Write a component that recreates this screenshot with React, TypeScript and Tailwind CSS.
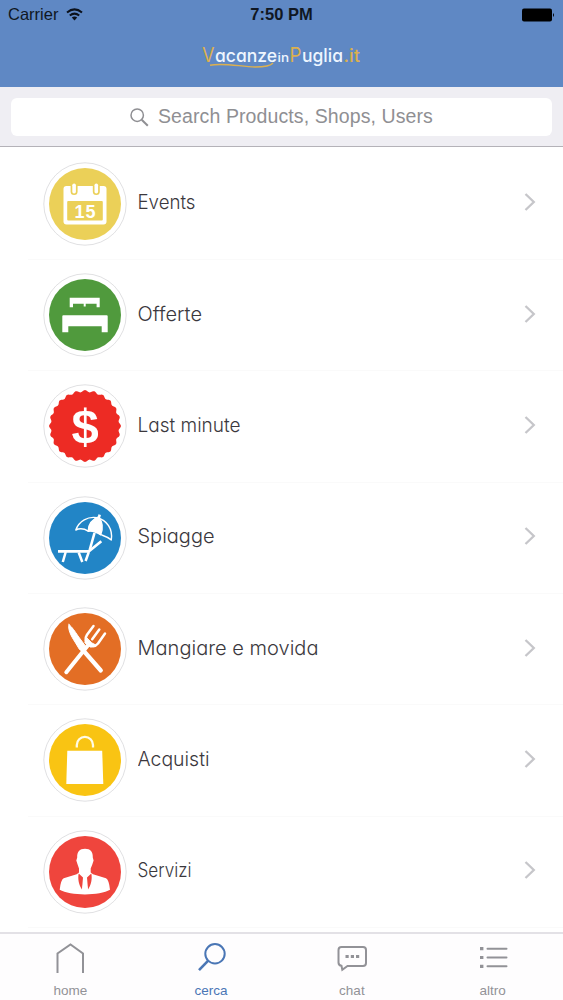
import React, { useState } from 'react';

const labelFont = "font-['Inter','Lato',sans-serif] [font-feature-settings:'cv11']";

function EventsIcon() {
    return (
        <g>
            <circle r="36" fill="#ebd058" />
            <rect x="-21.5" y="-18" width="43" height="38.5" rx="3" fill="#fff" />
            <rect x="-17.8" y="-3" width="35.6" height="19.5" rx="1" fill="#ebd058" />
            <rect x="-14.4" y="-22" width="7" height="13" rx="3.5" fill="#ebd058" />
            <rect x="7.8" y="-22" width="7" height="13" rx="3.5" fill="#ebd058" />
            <rect x="-12.7" y="-20.5" width="3.6" height="10" rx="1.8" fill="#fff" />
            <rect x="9.5" y="-20.5" width="3.6" height="10" rx="1.8" fill="#fff" />
            <text x="0" y="13.5" textAnchor="middle" textLength="21" fontSize="18" fontWeight="700" fill="#fff" className="font-['Liberation_Sans',sans-serif]">15</text>
        </g>
    );
}

function OfferteIcon() {
    return (
        <g>
            <circle r="36" fill="#509a3d" />
            <path d="M-15.3-17.3H14.7V-7.8H11.6V-11.3H.7V-8.4H-1.3V-11.3H-12V-7.8H-15.3Z" fill="#fff" />
            <path d="M-21.7.3H21.7Q22.7.3 22.7 1.3V17.3H16.7V11.3H-16.7V17.3H-22.7V1.3Q-22.7.3-21.7.3Z" fill="#fff" />
        </g>
    );
}

function LastMinuteIcon() {
    const points = [];
    for (let i = 0; i < 360; i++) {
        const angle = (i / 360) * Math.PI * 2;
        const radius = 34.9 + 1.0 * Math.cos(angle * 24);
        points.push(`${(radius * Math.sin(angle)).toFixed(2)},${(-radius * Math.cos(angle)).toFixed(2)}`);
    }
    return (
        <g>
            <polygon points={points.join(' ')} fill="#ed2b24" />
            <text x="0" y="16.5" textAnchor="middle" fontSize="49" fontWeight="700" fill="#fff" className="font-['Liberation_Sans',sans-serif]">$</text>
        </g>
    );
}

function SpiaggeIcon() {
    return (
        <g fill="none" stroke="#fff" strokeWidth="1.4" strokeLinejoin="round">
            <circle r="36" fill="#2285c6" stroke="none" />
            <path d="M-9.2-8C-6-17 3-22 12-20.3C22-18 28-9 26.3 2C23-1.2 19-2 15.7-3.3C12-7 7-8.5 3.2-6.8C-1-9.5-6-9.5-9.2-8Z" />
            <path d="M3.2-6.8C3-13 7-19 13.5-21C17.5-16 18-9 15.7-3.3C12-5.5 7-7.5 3.2-6.8Z" fill="#fff" />
            <path d="M13.8-20L14.7-23.3" strokeWidth="2.6" />
            <path d="M9.5-5L4.7 12" strokeWidth="2.6" />
            <path d="M-27 13.3H4L16.3 3.2" strokeWidth="2.7" />
            <path d="M-19.3 14L-22.2 24M-6.3 14.5L-2.7 24M3.8 14L.6 23" strokeWidth="2.5" />
        </g>
    );
}

function MangiareIcon() {
    return (
        <g stroke="#fff" strokeLinecap="round" strokeLinejoin="round" fill="none">
            <circle r="36" fill="#e36e25" stroke="none" />
            <path d="M-18.7 23.2L4-5" strokeWidth="4" />
            <path d="M8.5-23L2-14.2C-.8-10 .5-6.5 3.7-4.4C7.2-2 10.5-2.5 13-5.5L20-15.5" strokeWidth="2.5" />
            <path d="M14.3-19.5L7.2-9.8" strokeWidth="2.5" />
            <path d="M1.5-11L-.2-6.2L5.5-2L11.8-3.5L7-6Z" fill="#fff" strokeWidth="1" />
            <path d="M-16-24.5C-17.5-20-14-13-10-7L-5.5.5L-1 2.5L1.5-1.5L-7-13C-10-17.5-12.5-21.5-16-24.5Z" fill="#fff" strokeWidth="1" />
            <path d="M-3 0L15.8 21.5" strokeWidth="4.2" />
        </g>
    );
}

function AcquistiIcon() {
    return (
        <g>
            <circle r="36" fill="#f9c413" />
            <path d="M-17.7-9.3H17.2L18.3 24H-18.7Z" fill="#fff" />
            <path d="M-8.2-12.5V-15A8.1 8.1 0 0 1 8-15V-12.5" fill="none" stroke="#fffbe6" strokeWidth="2.3" />
        </g>
    );
}

function ServiziIcon() {
    return (
        <g>
            <circle r="36" fill="#ef453d" />
            <path d="M0-23.3C5.5-23.3 8-20 7.8-14.5L8.6-11.5L7.3-7.5L5.7-3.5V.5L8 2.2L21 6.3Q24 8 25 17.8C15 24-15 24-25.3 17.8Q-24.3 8-21.3 6.3L-8.3 2.2L-6 .5V-3.5L-7.4-7.5L-8.7-11.5L-7.8-14.5C-8-20-5.5-23.3 0-23.3Z" fill="#fff" />
            <path d="M-6.3 1.5L-2 5.5L-3 17.5C-6 13-7.5 7-6.3 1.5ZM6.3 1.5L2 5.5L3 17.5C6 13 7.5 7 6.3 1.5Z" fill="#ef453d" />
            <path d="M-2 5.3H1.8L1 8L2.7 17H-2.8L-1.2 8Z" fill="#fff" />
        </g>
    );
}

const categories = [
    { name: 'Events', length: 58, icon: <EventsIcon /> },
    { name: 'Offerte', length: 64.5, icon: <OfferteIcon /> },
    { name: 'Last minute', length: 103, icon: <LastMinuteIcon /> },
    { name: 'Spiagge', length: 77, icon: <SpiaggeIcon /> },
    { name: 'Mangiare e movida', length: 181, icon: <MangiareIcon /> },
    { name: 'Acquisti', length: 72, icon: <AcquistiIcon /> },
    { name: 'Servizi', length: 54, icon: <ServiziIcon /> },
];

function StatusBar() {
    return (
        <div className="grid h-[29px] grid-cols-3 items-center px-2 text-[16.5px] text-[#101722]">
            <div className="flex items-center gap-2">
                <span>Carrier</span>
                <svg width="17" height="13" viewBox="0 0 17 13" fill="none" stroke="#0b111b" strokeWidth="2">
                    <path d="M1 4.6Q8.5-1.8 16 4.6M3.8 7.6Q8.5 3.6 13.2 7.6" />
                    <path d="M5.8 9.6Q8.5 7.6 11.2 9.6L8.5 12.4Z" fill="#0b111b" stroke="none" />
                </svg>
            </div>
            <div className="text-center font-bold">7:50 PM</div>
            <div className="flex items-center justify-end">
                <svg width="33" height="14" viewBox="0 0 33 14">
                    <rect x="0" y="0.5" width="30" height="13" rx="2" />
                    <path d="M31 5Q33 7 31 9Z" />
                </svg>
            </div>
        </div>
    );
}

function Logo() {
    return (
        <svg width="164" height="30" viewBox="200 42 164 30" className={labelFont} fill="#eef6ff">
            <text x="202" y="62" fontSize="20" textLength="12.5" lengthAdjust="spacingAndGlyphs" fill="#dcb04f">V</text>
            <text x="215" y="62.3" fontSize="18" fontWeight="500" textLength="62" lengthAdjust="spacingAndGlyphs">acanze</text>
            <text x="277.5" y="62" fontSize="12.5" fontWeight="500" textLength="11.5" lengthAdjust="spacingAndGlyphs">in</text>
            <text x="289.5" y="62" fontSize="20" textLength="12" lengthAdjust="spacingAndGlyphs" fill="#dcb04f">P</text>
            <text x="302" y="62" fontSize="18" fontWeight="500" textLength="41" lengthAdjust="spacingAndGlyphs">uglia</text>
            <text x="343.5" y="62" fontSize="18" fontWeight="500" textLength="16.5" lengthAdjust="spacingAndGlyphs" fill="#dcb04f">.it</text>
            <path d="M210 65.3C222 62.5 240 66.5 255 67C265 67 271 65.5 273 63" fill="none" stroke="#dcb04f" strokeWidth="1.4" />
        </svg>
    );
}

function CategoryRow({ name, length, icon }: any) {
    return (
        <li className="ml-7 flex h-[111.35px] items-center border-b border-[#fafafa] pl-[15px] pr-[27px]">
            <svg width="84" height="84" viewBox="-42 -42 84 84">
                <circle r="41.2" fill="#fff" stroke="#dcdcdf" strokeWidth="0.9" />
                {icon}
            </svg>
            <svg width="200" height="32" viewBox="0 0 200 32" className={`ml-[11px] -mt-[3px] ${labelFont}`}>
                <text x="-0.5" y="23" fontSize="19.5" fontWeight="350" textLength={length} lengthAdjust="spacingAndGlyphs" fill="#3b383d">{name}</text>
            </svg>
            <svg width="12" height="18" viewBox="0 0 12 18" className="-mt-[3px] ml-auto" fill="none" stroke="#c6c6ca" strokeWidth="2.3">
                <path d="M1.5 1L9.8 9L1.5 17" />
            </svg>
        </li>
    );
}

function TabItem({ label, active, onClick, children }: any) {
    return (
        <button onClick={onClick} className={`flex flex-1 flex-col items-center pt-2 ${active ? 'text-[#4a76b5]' : 'text-[#929297]'}`}>
            <svg width="32" height="32" viewBox="0 0 32 32" fill="none" stroke="currentColor" strokeWidth="2">
                {children}
            </svg>
            <span className="mt-2 text-[13.5px] leading-[18px]">{label}</span>
        </button>
    );
}

export default function App() {
    const [tab, setTab] = useState('cerca');
    const [search, setSearch] = useState('');

    return (
        <div className="flex h-[1000px] w-[563px] flex-col overflow-hidden bg-white font-['Liberation_Sans',sans-serif]">
            <header className="h-[87px] bg-[#5f88c4]">
                <StatusBar />
                <div className="flex justify-center pt-[13px]">
                    <Logo />
                </div>
            </header>
            <div className="h-[60px] border-b border-[#b4b2b8] bg-[#efeef3] px-[11px] pt-[11px]">
                <label className="flex h-[38px] items-center rounded-[6px] bg-white pl-[119px]">
                    <svg width="19" height="19" viewBox="0 0 19 19" fill="none" stroke="#8f8f93" strokeWidth="1.5">
                        <circle cx="7.2" cy="7.2" r="6.2" />
                        <path d="M11.7 11.7L17.8 17.8" strokeWidth="2" />
                    </svg>
                    <input
                        className="ml-[9px] w-[300px] text-[19.5px] tracking-[0.1px] outline-none placeholder:text-[#8f8f93]"
                        type="text" placeholder="Search Products, Shops, Users" value={search} onChange={(e) => setSearch(e.target.value)} />
                </label>
            </div>
            <ul className="flex-1 pt-[1.5px]">
                {categories.map((category) => (
                    <CategoryRow key={category.name} name={category.name} length={category.length} icon={category.icon} />
                ))}
            </ul>
            <nav className="flex h-[68px] shrink-0 border-t-2 border-[#e3e1e6] bg-[#fefdfe]">
                <TabItem label="home" active={tab === 'home'} onClick={() => setTab('home')}>
                    <path d="M3.5 31V11.5L16.5 2.5L29 11.5V31" />
                </TabItem>
                <TabItem label="cerca" active={tab === 'cerca'} onClick={() => setTab('cerca')}>
                    <circle cx="20" cy="11.8" r="9.7" />
                    <path d="M13.2 18.7L4 28.1" strokeWidth="2.6" />
                </TabItem>
                <TabItem label="chat" active={tab === 'chat'} onClick={() => setTab('chat')}>
                    <path d="M5.5 5H27Q30 5 30 8V21Q30 24 27 24H11.5L6.3 27.7L5.5 23.8Q2.5 23.5 2.5 20.5V8Q2.5 5 5.5 5Z" />
                    <path d="M9.5 14.5H12.7M14.8 14.5H18M20 14.5H23.2" strokeWidth="3" />
                </TabItem>
                <TabItem label="altro" active={tab === 'altro'} onClick={() => setTab('altro')}>
                    <path d="M10.5 6.7H29.5M10.5 15.5H29.5M10.5 24.3H29.5" strokeLinecap="round" />
                    <path d="M3 6.7H6.4M3 15.5H6.4M3 24.3H6.4" strokeWidth="3.2" />
                </TabItem>
            </nav>
        </div>
    );
}
